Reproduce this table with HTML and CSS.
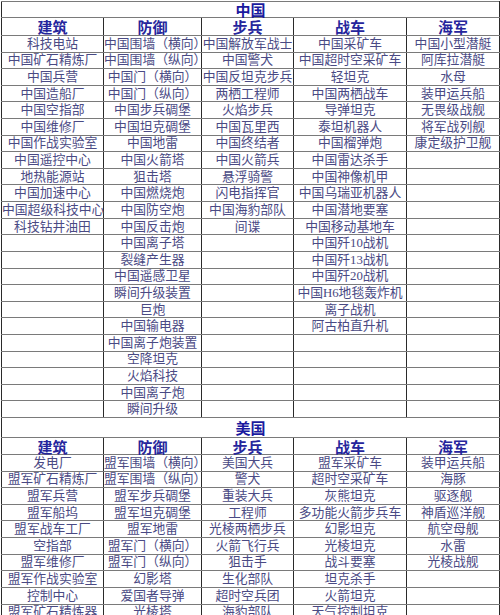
FILE: index.html
```html
<!DOCTYPE html>
<html lang="zh-CN">
<head>
<meta charset="utf-8">
<title>红警单位表</title>
<link rel="stylesheet" href="styles.css">
</head>
<body>
<table class="units">
<colgroup>
<col class="c1"><col class="c2"><col class="c3"><col class="c4"><col class="c5">
</colgroup>
<tbody>
<tr class="title first"><td colspan="5">中国</td></tr>
<tr class="head cn"><td>建筑</td><td>防御</td><td>步兵</td><td>战车</td><td>海军</td></tr>
<tr><td>科技电站</td><td>中国围墙（横向）</td><td>中国解放军战士</td><td>中国采矿车</td><td>中国小型潜艇</td></tr>
<tr><td>中国矿石精炼厂</td><td>中国围墙（纵向）</td><td>中国警犬</td><td>中国超时空采矿车</td><td>阿库拉潜艇</td></tr>
<tr><td>中国兵营</td><td>中国门（横向）</td><td>中国反坦克步兵</td><td>轻坦克</td><td>水母</td></tr>
<tr><td>中国造船厂</td><td>中国门（纵向）</td><td>两栖工程师</td><td>中国两栖战车</td><td>装甲运兵船</td></tr>
<tr><td>中国空指部</td><td>中国步兵碉堡</td><td>火焰步兵</td><td>导弹坦克</td><td>无畏级战舰</td></tr>
<tr><td>中国维修厂</td><td>中国坦克碉堡</td><td>中国瓦里西</td><td>泰坦机器人</td><td>将军战列舰</td></tr>
<tr><td>中国作战实验室</td><td>中国地雷</td><td>中国终结者</td><td>中国榴弹炮</td><td>康定级护卫舰</td></tr>
<tr><td>中国遥控中心</td><td>中国火箭塔</td><td>中国火箭兵</td><td>中国雷达杀手</td><td></td></tr>
<tr><td>地热能源站</td><td>狙击塔</td><td>悬浮骑警</td><td>中国神像机甲</td><td></td></tr>
<tr><td>中国加速中心</td><td>中国燃烧炮</td><td>闪电指挥官</td><td>中国乌瑞亚机器人</td><td></td></tr>
<tr><td>中国超级科技中心</td><td>中国防空炮</td><td>中国海豹部队</td><td>中国潜地要塞</td><td></td></tr>
<tr><td>科技钻井油田</td><td>中国反击炮</td><td>间谍</td><td>中国移动基地车</td><td></td></tr>
<tr><td></td><td>中国离子塔</td><td></td><td>中国歼10战机</td><td></td></tr>
<tr><td></td><td>裂缝产生器</td><td></td><td>中国歼13战机</td><td></td></tr>
<tr><td></td><td>中国遥感卫星</td><td></td><td>中国歼20战机</td><td></td></tr>
<tr><td></td><td>瞬间升级装置</td><td></td><td>中国H6地毯轰炸机</td><td></td></tr>
<tr><td></td><td>巨炮</td><td></td><td>离子战机</td><td></td></tr>
<tr><td></td><td>中国输电器</td><td></td><td>阿古柏直升机</td><td></td></tr>
<tr><td></td><td>中国离子炮装置</td><td></td><td></td><td></td></tr>
<tr><td></td><td>空降坦克</td><td></td><td></td><td></td></tr>
<tr><td></td><td>火焰科技</td><td></td><td></td><td></td></tr>
<tr><td></td><td>中国离子炮</td><td></td><td></td><td></td></tr>
<tr><td></td><td>瞬间升级</td><td></td><td></td><td></td></tr>
<tr class="title second"><td colspan="5">美国</td></tr>
<tr class="head us"><td>建筑</td><td>防御</td><td>步兵</td><td>战车</td><td>海军</td></tr>
<tr><td>发电厂</td><td>盟军围墙（横向）</td><td>美国大兵</td><td>盟军采矿车</td><td>装甲运兵船</td></tr>
<tr><td>盟军矿石精炼厂</td><td>盟军围墙（纵向）</td><td>警犬</td><td>超时空采矿车</td><td>海豚</td></tr>
<tr><td>盟军兵营</td><td>盟军步兵碉堡</td><td>重装大兵</td><td>灰熊坦克</td><td>驱逐舰</td></tr>
<tr><td>盟军船坞</td><td>盟军坦克碉堡</td><td>工程师</td><td>多功能火箭步兵车</td><td>神盾巡洋舰</td></tr>
<tr><td>盟军战车工厂</td><td>盟军地雷</td><td>光棱两栖步兵</td><td>幻影坦克</td><td>航空母舰</td></tr>
<tr><td>空指部</td><td>盟军门（横向）</td><td>火箭飞行兵</td><td>光棱坦克</td><td>水雷</td></tr>
<tr><td>盟军维修厂</td><td>盟军门（纵向）</td><td>狙击手</td><td>战斗要塞</td><td>光棱战舰</td></tr>
<tr><td>盟军作战实验室</td><td>幻影塔</td><td>生化部队</td><td>坦克杀手</td><td></td></tr>
<tr><td>控制中心</td><td>爱国者导弹</td><td>超时空兵团</td><td>火箭坦克</td><td></td></tr>
<tr><td>盟军矿石精炼器</td><td>光棱塔</td><td>海豹部队</td><td>天气控制坦克</td><td></td></tr>
</tbody>
</table>
</body>
</html>
```
FILE: styles.css
```css
html, body {
  margin: 0;
  padding: 0;
  background: #ffffff;
  overflow: hidden;
}
body {
  width: 500px;
  height: 615px;
}
.units {
  margin: 1px 0 0 1px;
  width: 498px;
  table-layout: fixed;
  border-collapse: collapse;
  font-family: "Liberation Serif", "Noto Sans CJK SC", serif;
  font-size: 12.8px;
  color: #4a4a84;
}
.c1 { width: 102px; }
.c2 { width: 98px; }
.c3 { width: 92px; }
.c4 { width: 113px; }
.c5 { width: 93px; }
.units td {
  border-top: 1px solid #7a7a7a;
  border-bottom: 1px solid #7a7a7a;
  border-left: 1px solid #2a2a2a;
  border-right: 1px solid #2a2a2a;
  padding: 0;
  text-align: center;
  vertical-align: middle;
  white-space: nowrap;
  overflow: visible;
  line-height: 14px;
}
.units tr {
  height: 16.62px;
}
.units .title td {
  font-family: "Noto Sans CJK SC", sans-serif;
  font-weight: bold;
  font-size: 15px;
  color: #1a1a9e;
  line-height: 14px;
}
.units tr.first { height: 16px; }
.units tr.second { height: 20px; }
.units .head td {
  font-family: "Noto Sans CJK SC", sans-serif;
  font-weight: bold;
  font-size: 15px;
  color: #25259c;
  line-height: 15px;
}
.units tr.head.cn { height: 18px; }
.units tr.head.us { height: 17px; }
```
